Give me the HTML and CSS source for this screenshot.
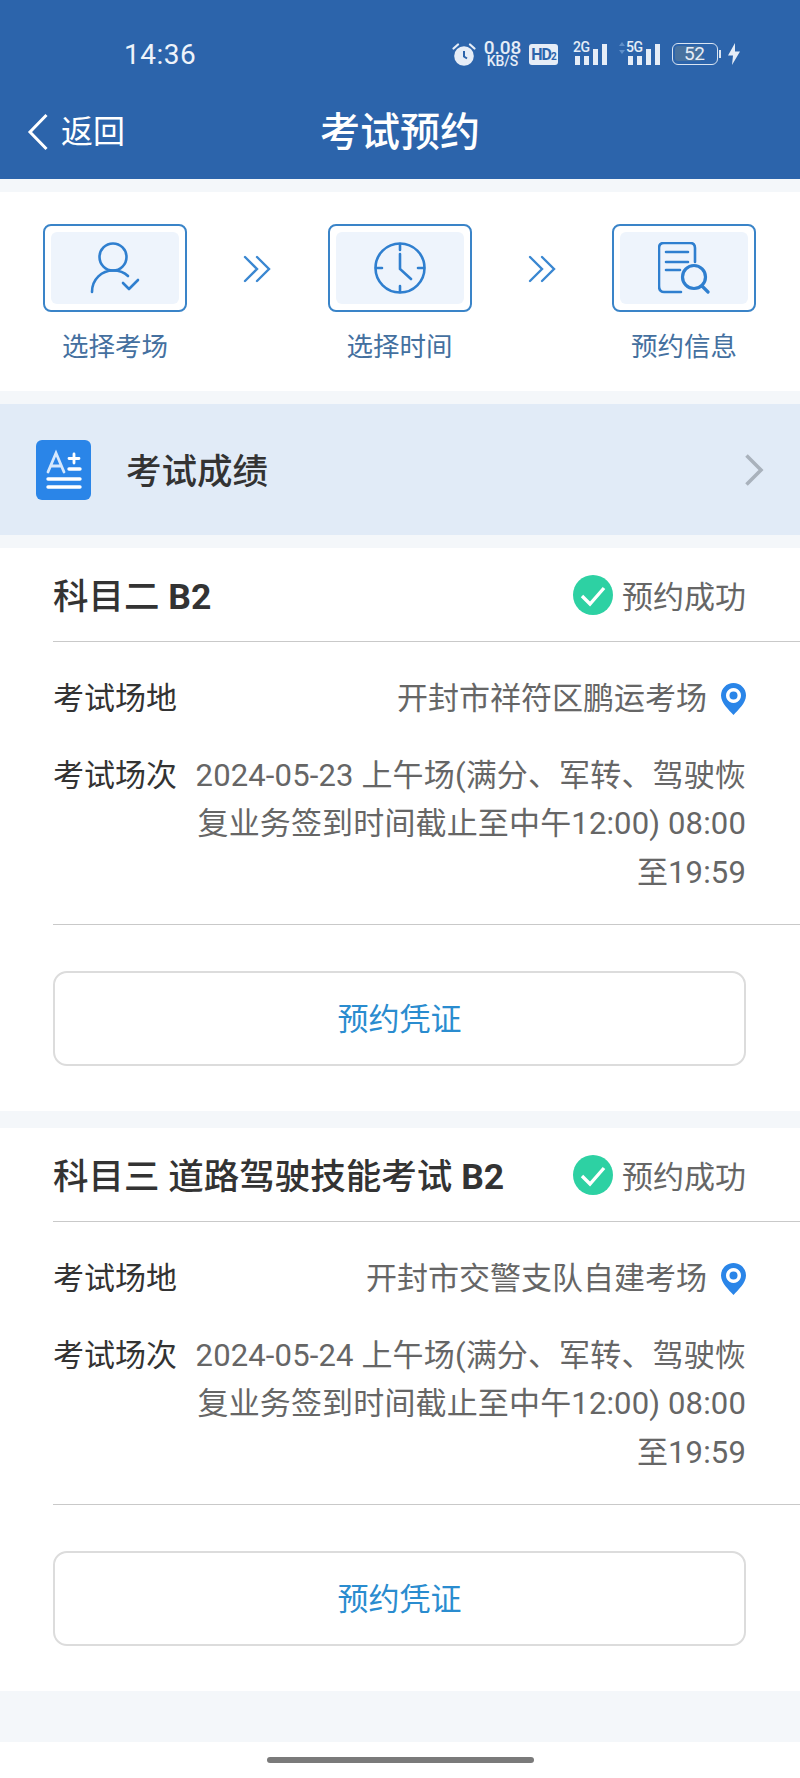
FILE: index.html
```html
<!DOCTYPE html>
<html lang="zh-CN">
<head>
  <meta charset="UTF-8" />
  <meta name="viewport" content="width=device-width, initial-scale=1.0"/>
  <title>考试预约</title>
  <link rel="stylesheet" href="styles.css">
</head>
<body>
  <header class="header">
    <div class="statusbar">
      <span class="time">14:36</span>
      <div class="status-icons">
        <svg class="alarm" viewBox="0 0 24 23" width="24" height="23">
          <path d="M1.500 5.500 L6 1.500 M22.500 5.500 L18 1.500" stroke="#e6edf7" stroke-width="2.200" stroke-linecap="round"/>
          <circle cx="12" cy="13" r="9.800" fill="#e6edf7"/>
          <path d="M12 8 V13.500 L15 15.500" stroke="#2c64ab" stroke-width="2" fill="none"/>
        </svg>
        <div class="speed"><span class="speed-num">0.08</span><span class="speed-unit">KB/S</span></div>
        <span class="hd">HD<small>2</small></span>
        <div class="signal signal-first">
          <span class="net">2G</span>
          <div class="bars"><i class="b1"></i><i class="b2"></i><i class="b3"></i><i class="b4"></i></div>
        </div>
        <div class="signal signal-second">
          <svg class="updown" viewBox="0 0 8 14" width="8" height="14"><path d="M4 1 L7 5 H1 Z M4 13 L7 9 H1 Z" fill="#5f8fc9"/></svg>
          <span class="net">5G</span>
          <div class="bars"><i class="b1"></i><i class="b2"></i><i class="b3"></i><i class="b4"></i></div>
        </div>
        <div class="battery"><span class="battery-level">52</span></div>
        <span class="battery-cap"></span>
        <svg class="bolt" viewBox="0 0 14 22" width="14" height="22"><path d="M8 0 L1 12.500 H6 L5 22 L13 8.500 H8 Z" fill="#e6edf7"/></svg>
      </div>
    </div>
    <div class="navbar">
      <div class="back">
        <svg viewBox="0 0 22 38" width="22" height="38"><path d="M19.500 2 L3 19 L19.500 36" fill="none" stroke="#fff" stroke-width="3"/></svg>
        <span>返回</span>
      </div>
      <h1>考试预约</h1>
    </div>
  </header>

  <section class="steps">
    <div class="step">
      <div class="step-box"><div class="step-inner">
        <svg viewBox="0 0 50 52" width="50" height="52" fill="none" stroke="#2f7fcf" stroke-width="2.600" stroke-linecap="round" stroke-linejoin="round">
          <circle cx="23" cy="15" r="13.500"/>
          <path d="M2 50 C2 37 12 28.500 23 28.500 C29 28.500 34 30 38 34"/>
          <path d="M33 41 L39 47 L48 38"/>
        </svg>
      </div></div>
      <span class="step-label">选择考场</span>
    </div>
    <svg class="step-arrow" viewBox="0 0 28 28" width="28" height="28" fill="none" stroke="#3a87d1" stroke-width="2.400" stroke-linecap="round"><path d="M2 2 L14 14 L2 26 M14 2 L26 14 L14 26"/></svg>
    <div class="step">
      <div class="step-box"><div class="step-inner">
        <svg viewBox="0 0 52 52" width="52" height="52" fill="none" stroke="#2f7fcf" stroke-width="2.600" stroke-linecap="round">
          <circle cx="26" cy="26" r="24.500"/>
          <path d="M26 2 V8 M26 44 V50 M2 26 H8 M44 26 H50"/>
          <path d="M26 12 V27 L37 37"/>
        </svg>
      </div></div>
      <span class="step-label">选择时间</span>
    </div>
    <svg class="step-arrow" viewBox="0 0 28 28" width="28" height="28" fill="none" stroke="#3a87d1" stroke-width="2.400" stroke-linecap="round"><path d="M2 2 L14 14 L2 26 M14 2 L26 14 L14 26"/></svg>
    <div class="step">
      <div class="step-box"><div class="step-inner">
        <svg viewBox="0 0 52 52" width="52" height="52" fill="none" stroke="#2f7fcf" stroke-width="2.600" stroke-linecap="round" stroke-linejoin="round">
          <path d="M37 20 V6 Q37 1 32 1 H6 Q1 1 1 6 V44 Q1 50 6 50 H23"/>
          <path d="M8 10 H30 M8 20 H30 M8 28 H22"/>
          <circle cx="36" cy="35" r="11.500" stroke-width="3.200"/>
          <path d="M44 44 L50 50" stroke-width="3.200"/>
        </svg>
      </div></div>
      <span class="step-label">预约信息</span>
    </div>
  </section>

  <section class="score">
    <div class="score-icon">
      <svg viewBox="0 0 55 60" width="55" height="60" fill="none" stroke="#fff" stroke-linecap="round">
        <path d="M12 32 L20 13 L28 32 M15 26 H25" stroke="#d5e8fd" stroke-width="2.800"/>
        <path d="M33 18.500 H43 M38 14 V23" stroke-width="2.800"/>
        <path d="M33 29 H44" stroke-width="3.400"/>
        <path d="M12 39 H44 M12 47 H44" stroke-width="3.400"/>
      </svg>
    </div>
    <span class="score-title">考试成绩</span>
    <svg class="score-arrow" viewBox="0 0 20 34" width="20" height="34"><path d="M2.500 2.500 L17 17 L2.500 31.500" fill="none" stroke="#a9b2bc" stroke-width="3.600"/></svg>
  </section>

  <section class="card">
    <div class="card-head">
      <h2>科目二 <b>B2</b></h2>
      <div class="state">
        <svg viewBox="0 0 40 40" width="40" height="40"><circle cx="20" cy="20" r="20" fill="#2dd1a3"/><path d="M9 21 L17 29 L31 13" fill="none" stroke="#fff" stroke-width="3.400"/></svg>
        <span>预约成功</span>
      </div>
    </div>
    <div class="card-row place-row">
      <span class="row-label">考试场地</span>
      <div class="row-value">
        <span>开封市祥符区鹏运考场</span>
        <svg viewBox="0 0 25 32" width="25" height="32"><path fill-rule="evenodd" d="M12.500 0 C19.500 0 25 5.500 25 12.500 C25 20 17 27 12.500 32 C8 27 0 20 0 12.500 C0 5.500 5.500 0 12.500 0 Z M12.500 5 A7.500 7.500 0 1 0 12.501 5 Z" fill="#2a85e8"/><circle cx="12.500" cy="12.500" r="4" fill="#2a85e8"/></svg>
      </div>
    </div>
    <div class="card-row time-row">
      <span class="row-label">考试场次</span>
      <div class="row-value row-text">2024-05-23 上午场(满分、军转、驾驶恢<br>复业务签到时间截止至中午12:00) 08:00<br>至19:59</div>
    </div>
    <div class="card-action">
      <button class="voucher">预约凭证</button>
    </div>
  </section>

  <section class="card card-second">
    <div class="card-head">
      <h2>科目三 道路驾驶技能考试 <b>B2</b></h2>
      <div class="state">
        <svg viewBox="0 0 40 40" width="40" height="40"><circle cx="20" cy="20" r="20" fill="#2dd1a3"/><path d="M9 21 L17 29 L31 13" fill="none" stroke="#fff" stroke-width="3.400"/></svg>
        <span>预约成功</span>
      </div>
    </div>
    <div class="card-row place-row">
      <span class="row-label">考试场地</span>
      <div class="row-value">
        <span>开封市交警支队自建考场</span>
        <svg viewBox="0 0 25 32" width="25" height="32"><path fill-rule="evenodd" d="M12.500 0 C19.500 0 25 5.500 25 12.500 C25 20 17 27 12.500 32 C8 27 0 20 0 12.500 C0 5.500 5.500 0 12.500 0 Z M12.500 5 A7.500 7.500 0 1 0 12.501 5 Z" fill="#2a85e8"/><circle cx="12.500" cy="12.500" r="4" fill="#2a85e8"/></svg>
      </div>
    </div>
    <div class="card-row time-row">
      <span class="row-label">考试场次</span>
      <div class="row-value row-text">2024-05-24 上午场(满分、军转、驾驶恢<br>复业务签到时间截止至中午12:00) 08:00<br>至19:59</div>
    </div>
    <div class="card-action">
      <button class="voucher">预约凭证</button>
    </div>
  </section>

  <div class="homebar"><span></span></div>
</body>
</html>
```

FILE: styles.css
```css
* {
  box-sizing: border-box;
}
body {
  font-family: Roboto, "Noto Sans CJK SC", sans-serif;
  margin: 0;
  padding: 0;
  width: 800px;
  height: 1778px;
  overflow: hidden;
  background: #f4f7fa;
  color: #333;
}

/* header */
.header {
  height: 179px;
  background: #2c64ab;
  color: #fff;
}
.statusbar {
  height: 106px;
  padding: 2px 59px 0 124px;
  display: flex;
  align-items: center;
  justify-content: space-between;
}
.time {
  font-size: 28px;
  color: #eef3fa;
  letter-spacing: 0.5px;
}
.status-icons {
  display: flex;
  align-items: center;
  color: #e6edf7;
}
.alarm {
  margin-right: 7px;
}
.speed {
  display: flex;
  flex-direction: column;
  align-items: center;
  width: 39px;
  margin-right: 7px;
  font-weight: 500;
}
.speed-num {
  font-size: 19px;
  line-height: 14px;
}
.speed-unit {
  font-size: 14px;
  line-height: 12px;
}
.hd {
  width: 29px;
  height: 21px;
  background: #e6edf7;
  color: #2c64ab;
  border-radius: 3px;
  font-size: 16px;
  font-weight: 700;
  line-height: 21px;
  text-align: center;
  letter-spacing: -1px;
}
.hd small {
  font-size: 10px;
}
.signal {
  position: relative;
  display: flex;
  align-items: flex-end;
  height: 22px;
}
.signal-first {
  width: 34px;
  margin-left: 15px;
  padding-left: 2px;
}
.signal-second {
  width: 42px;
  margin-left: 11px;
  padding-left: 10px;
}
.updown {
  position: absolute;
  left: 0;
  top: -2px;
}
.net {
  position: absolute;
  top: -3px;
  left: 0;
  font-size: 14px;
  line-height: 14px;
  font-weight: 500;
  letter-spacing: -0.5px;
}
.signal-second .net {
  left: 8px;
}
.bars {
  display: flex;
  align-items: flex-end;
  gap: 4px;
}
.bars i {
  display: block;
  width: 5px;
  background: #e6edf7;
}
.bars .b1, .bars .b2 {
  height: 9px;
}
.bars .b3 {
  height: 16px;
}
.bars .b4 {
  height: 21px;
}
.battery {
  width: 46px;
  height: 22px;
  margin-left: 12px;
  padding: 2px;
  border: 1.5px solid #d9e4f2;
  border-radius: 6px;
}
.battery-level {
  display: block;
  width: 27px;
  height: 15px;
  background: #48729f;
  border-radius: 3px;
  font-size: 19px;
  line-height: 15px;
  padding-left: 9px;
  letter-spacing: -0.5px;
  white-space: nowrap;
}
.battery-cap {
  width: 2px;
  height: 8px;
  background: #d9e4f2;
  margin-left: 1px;
}
.bolt {
  margin-left: 6px;
}
.navbar {
  position: relative;
  height: 73px;
  padding-top: 2px;
  display: flex;
  align-items: flex-start;
  justify-content: center;
}
.navbar h1 {
  margin: 0;
  font-size: 40px;
  font-weight: 500;
  line-height: 50px;
}
.back {
  position: absolute;
  left: 27px;
  top: 6px;
  display: flex;
  align-items: center;
  gap: 12px;
  font-size: 32px;
  line-height: 40px;
}

/* steps */
.steps {
  height: 199px;
  margin-top: 13px;
  padding: 32px 44px 0 43px;
  background: #fff;
  display: flex;
  align-items: flex-start;
  justify-content: space-between;
}
.step {
  width: 144px;
  display: flex;
  flex-direction: column;
  align-items: center;
}
.step-box {
  width: 144px;
  height: 88px;
  padding: 6px;
  border: 2px solid #3a84c8;
  border-radius: 8px;
}
.step-inner {
  height: 100%;
  background: #eef4fc;
  border-radius: 6px;
  display: flex;
  align-items: center;
  justify-content: center;
}
.step-label {
  margin-top: 17px;
  font-size: 26.500px;
  line-height: 36px;
  color: #44709f;
}
.step-arrow {
  margin-top: 31px;
}

/* score entry */
.score {
  height: 131px;
  margin-top: 13px;
  padding: 0 36px;
  background: #e1ebf7;
  display: flex;
  align-items: center;
}
.score-icon {
  width: 55px;
  height: 60px;
  background: #2a85e8;
  border-radius: 6px;
}
.score-icon svg {
  display: block;
}
.score-title {
  margin: 0 0 3px 35px;
  font-size: 35.500px;
  font-weight: 500;
  color: #333;
}
.score-arrow {
  margin-left: auto;
}

/* cards */
.card {
  margin-top: 13px;
  height: 563px;
  padding-left: 53px;
  background: #fff;
}
.card-second {
  margin-top: 17px;
}
.card-head {
  height: 94px;
  padding-right: 54px;
  border-bottom: 1px solid #c9c9c9;
  display: flex;
  align-items: center;
  justify-content: space-between;
}
.card-head h2 {
  margin: 0 0 2px;
  font-size: 35.500px;
  font-weight: 500;
  color: #333;
}
.card-head h2 b {
  font-weight: 700;
}
.state {
  display: flex;
  align-items: center;
  gap: 9px;
  font-size: 31px;
  color: #666;
}
.card-row {
  padding-right: 54px;
  display: flex;
  justify-content: space-between;
  font-size: 31px;
  line-height: 48.500px;
}
.place-row {
  margin-top: 33px;
}
.time-row {
  margin-top: 28px;
  height: 173px;
  border-bottom: 1px solid #c9c9c9;
}
.row-label {
  color: #333;
  white-space: nowrap;
}
.row-value {
  color: #666;
  display: flex;
  align-items: center;
  gap: 14px;
}
.row-text {
  display: block;
  text-align: right;
  white-space: nowrap;
  letter-spacing: 0.15px;
}
.card-action {
  padding: 46px 54px 0 0;
}
.voucher {
  display: block;
  width: 100%;
  height: 95px;
  padding: 0 0 3px;
  background: #fff;
  border: 2px solid #dcdcdc;
  border-radius: 14px;
  font: inherit;
  font-size: 31px;
  color: #2a8ccf;
}

/* bottom */
.homebar {
  margin-top: 51px;
  height: 37px;
  background: #fff;
  display: flex;
  justify-content: center;
  padding-top: 15px;
}
.homebar span {
  width: 267px;
  height: 6px;
  background: #7a7a7a;
  border-radius: 3px;
}
```
